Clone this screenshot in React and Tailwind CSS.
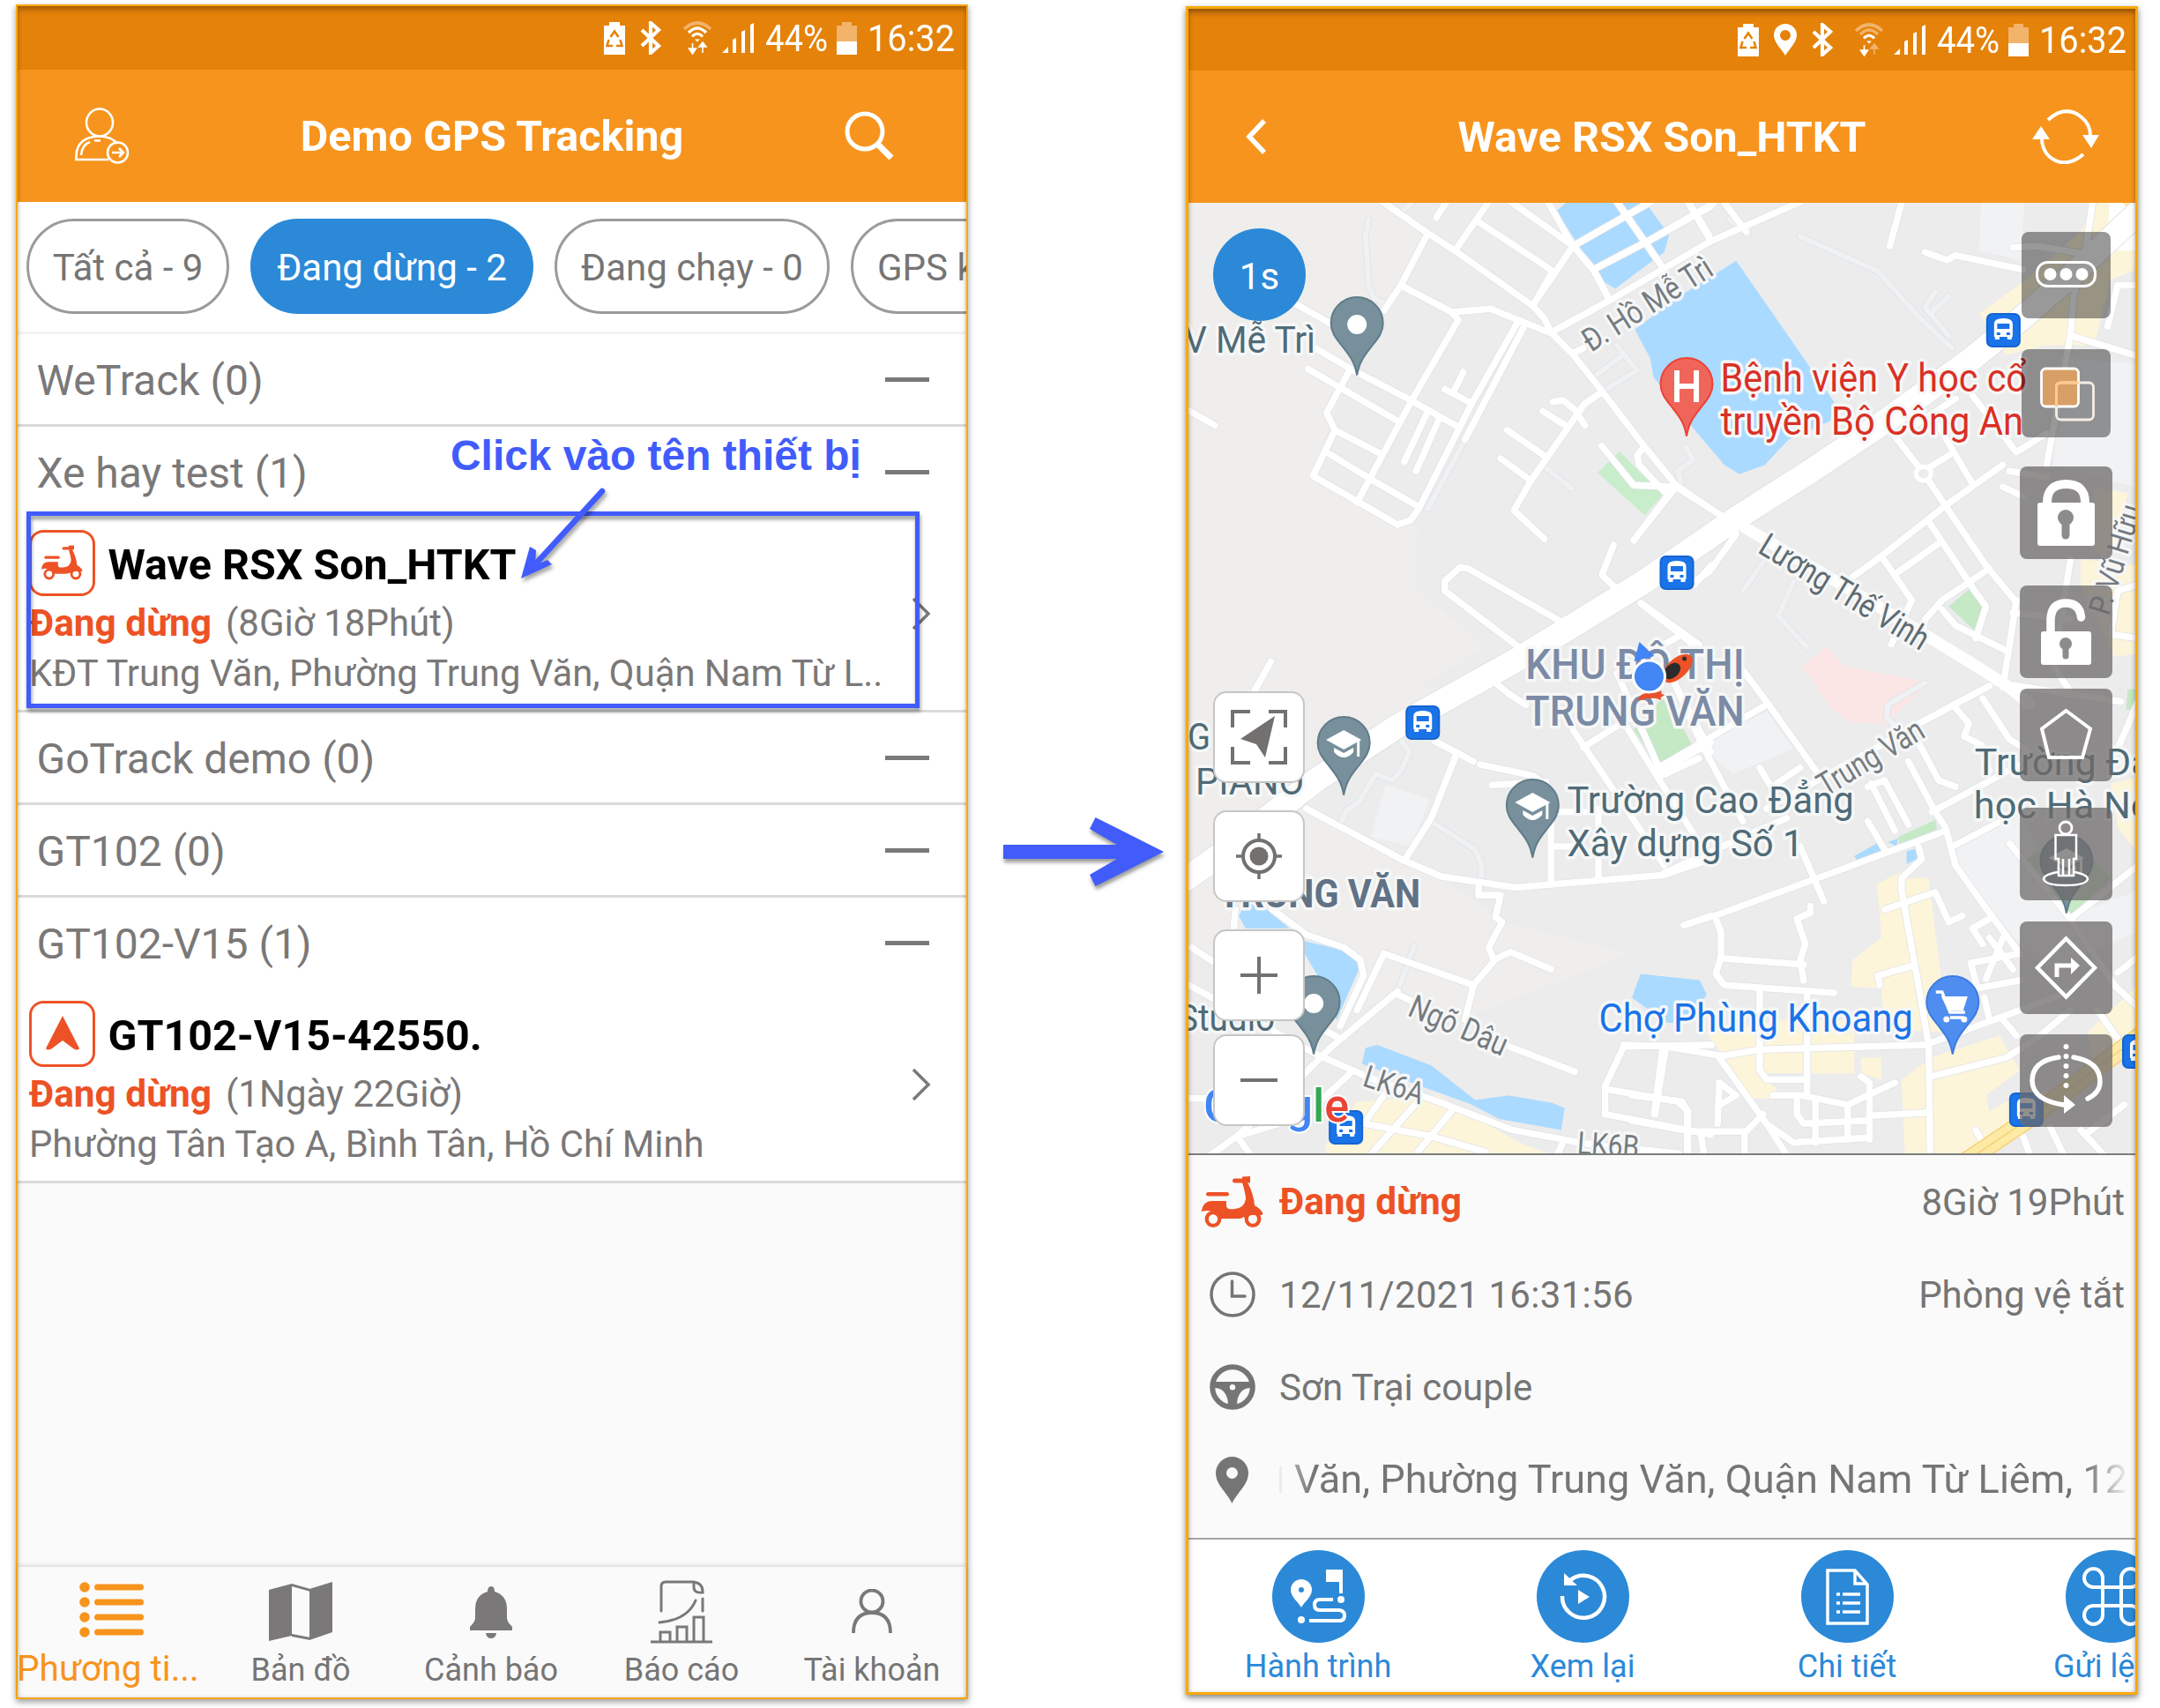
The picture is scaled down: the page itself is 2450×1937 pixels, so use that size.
import React from "react";
import { Command } from "lucide-react";

/* ---------- status bar ---------- */

function RecycleBattery() {
  return (
    <svg className="h-[37px] w-[24px]" viewBox="0 0 24 37">
      <path d="M6 0h12v4h6v33H0V4h6z" fill="#fff" />
      <g fill="none" stroke="#e58209" strokeWidth="2.600">
        <path d="M7.500 17l4.500-6.500 4.500 6.500M18.500 20l2 7H14M10 27H3.500l2-7" />
      </g>
    </svg>
  );
}

function BluetoothGlyph() {
  return (
    <svg className="h-[38px] w-[24px]" viewBox="0 0 24 38">
      <path d="M2 10l19 18-9 8V2l9 8L2 28" fill="none" stroke="#fff" strokeWidth="4.2" strokeLinejoin="miter" />
    </svg>
  );
}

function WifiGlyph({ dim }) {
  return (
    <svg className="h-[38px] w-[32px]" viewBox="0 0 32 38" fill="none" strokeWidth="3">
      <path d="M1 9Q16 -5 31 9" stroke="#f2b46b" strokeWidth="3.6" />
      <path d="M6 13Q16 3 26 13" stroke={dim ? "#f2b46b" : "#fff"} strokeWidth="3.4" />
      <path d="M10 17.500Q16 11 22 17.500" stroke="#fff" />
      <path d="M13 20.500h6l-3 3z" fill="#fff" />
      <path d="M10.500 25v8M6.500 31h8l-4 6z" stroke="#fff" fill="#fff" strokeWidth="1.600" />
      <path d="M22 36v-9M18 29h8l-4-5z" stroke={dim ? "#f2b46b" : "#fff"} fill={dim ? "#f2b46b" : "#fff"} strokeWidth="1.600" />
    </svg>
  );
}

function SignalGlyph() {
  return (
    <svg className="h-[36px] w-[36px]" viewBox="0 0 36 36" fill="#fff">
      <path d="M0 35l7-7v7zM12 20l4-2v17h-4zM22 11l4-2v26h-4zM32 3l4-2v34h-4z" />
    </svg>
  );
}

function LocationGlyph() {
  return (
    <svg className="h-[36px] w-[26px]" viewBox="0 0 26 36">
      <path fillRule="evenodd" d="M13 0a13 13 0 0 1 13 13c0 8-9 16-13 23C9 29 0 21 0 13A13 13 0 0 1 13 0zm0 7a6 6 0 1 0 0 12 6 6 0 0 0 0-12z" fill="#fff" />
    </svg>
  );
}

function StatusBar({ location, className }) {
  return (
    <div className={"flex shrink-0 items-center justify-end bg-[#e58209] text-[43px] leading-none text-white " + className}>
      <RecycleBattery />
      {location ? (
        <span className="ml-[17px] flex"><LocationGlyph /></span>
      ) : null}
      <span className="ml-[17px] flex"><BluetoothGlyph /></span>
      <span className="ml-[25px] flex"><WifiGlyph dim={location} /></span>
      <span className="ml-[12px] flex"><SignalGlyph /></span>
      <span className="ml-[13px] w-[71px]">
        <span className="inline-block origin-left scale-x-[0.89]">44%</span>
      </span>
      <svg className="ml-[10px] h-[37px] w-[23px]" viewBox="0 0 23 37">
        <path d="M6 0h11v4h6v33H0V4h6z" fill="#f2b46b" />
        <path d="M0 22h23v15H0z" fill="#fff" />
      </svg>
      <span className="ml-[12px] w-[100px]">
        <span className="inline-block origin-left scale-x-[0.925]">16:32</span>
      </span>
    </div>
  );
}

/* ---------- shared glyphs ---------- */

function Scooter({ className, hub = "#fff" }) {
  return (
    <svg className={className} viewBox="0 0 70 58" fill="#ed5226">
      <path d="M37.500 2.500H46V0.500L55 0V7.500H37.500a2.500 2.500 0 0 1 0-5z" />
      <rect x="5" y="18" width="26" height="4.600" rx="2.300" />
      <path d="M0 38.500Q2 28.500 11 28H28V33Q28 37 33 37.300H36Q48 37 50 26Q50 20 46 7H52Q59 20 60 33Q66 36 69.500 42L68 44H58Q52 44 47 46.500Q45 48 40 48H20Q20 42 10 39.500Q5 38.500 0 40z" />
      <circle cx="13" cy="48.500" r="7.300" fill={hub} stroke="#ed5226" strokeWidth="4.200" />
      <circle cx="58" cy="48.500" r="7.300" fill={hub} stroke="#ed5226" strokeWidth="4.200" />
      <path d="M46 40H66L69 44H58Q52 44 48 47z" />
    </svg>
  );
}

/* ---------- left phone ---------- */

function Chip({ active, className, children }) {
  return (
    <div
      className={
        "flex h-[108px] shrink-0 items-center justify-center rounded-full pt-[2px] text-[42px] whitespace-nowrap " +
        (active ? "bg-[#2b89d8] text-white " : "border-[3px] border-[#9b9b9b] bg-white text-[#757575] ") +
        className
      }
    >
      {children}
    </div>
  );
}

function GroupRow({ name, line = true }) {
  return (
    <div
      className={
        "flex h-[105px] items-center justify-between border-b-[3px] pt-[3px] pr-[42px] pl-[21.5px] text-[48px] text-[#7a7878] " +
        (line ? "border-[#dadada]" : "border-transparent")
      }
    >
      <span>{name}</span>
      <span className="mb-[3px] h-[5px] w-[50px] bg-[#7a7878]" />
    </div>
  );
}

function Device({ icon, name, time, address }) {
  return (
    <div className="flex h-[219px] items-center border-b-[3px] border-[#dadada] pr-[40px] pl-[13px]">
      <div className="flex h-full grow flex-col pt-[12px]">
        <div className="flex h-[78px] items-start">
          <span className="flex h-[75px] w-[75px] items-center justify-center rounded-[16px] border-[3px] border-[#ed5226]">{icon}</span>
          <span className="mt-[2px] ml-[14.5px] text-[48.4px] leading-[75px] font-bold text-black">{name}</span>
        </div>
        <div className="flex gap-[16px] text-[42px] leading-[56px] text-[#7a7878]">
          <span className="text-[42.4px] font-bold text-[#ed5226]">Đang dừng</span>
          <span>{time}</span>
        </div>
        <div className="text-[41.8px] leading-[57px] whitespace-nowrap text-[#7a7878]">{address}</div>
      </div>
      <svg className="h-[38px] w-[22px] shrink-0 -translate-y-px" viewBox="0 0 22 38">
        <path d="M2 2l17 17L2 36" fill="none" stroke="#7a7878" strokeWidth="3.500" />
      </svg>
    </div>
  );
}

function Tab({ icon, label, active }) {
  return (
    <div className={"flex shrink-0 flex-col items-center " + (active ? "w-[213px] text-[#f7941d]" : "w-[216px] text-[#757575]")}>
      <div className="flex h-[90px] items-center justify-center pt-[6px]">{icon}</div>
      <span className={"leading-[50px] whitespace-nowrap " + (active ? "-ml-px self-start text-[40.6px]" : "pt-[2px] text-[36px]")}>{label}</span>
    </div>
  );
}

function LeftPhone() {
  return (
    <div className="relative mt-[5px] ml-[18px] flex h-[1922px] w-[1080px] flex-col border-2 border-[#f8a90c] bg-white shadow-[0_3px_7px_rgba(0,0,0,0.4)]">
      <StatusBar className="h-[72px] pr-[12px]" />
      <div className="flex h-[150px] shrink-0 items-center bg-[#f7941d]">
        <div className="flex w-[160px] shrink-0 pl-[65px]">
          <svg className="h-[64px] w-[62px]" viewBox="0 0 62 64" fill="none" stroke="#fff" strokeWidth="2.600">
            <ellipse cx="28" cy="17" rx="15" ry="15.500" />
            <path d="M38 59H1.500V55Q2 33 28 32.500Q42 33 48 41M7 54Q8 42 17 39M22 37.500h7" />
            <circle cx="48.500" cy="51" r="11.500" />
            <path d="M42 51h12M50 46l5 5-5 5" />
          </svg>
        </div>
        <span className="grow pt-[3px] text-center text-[48.5px] font-bold text-white">Demo GPS Tracking</span>
        <div className="flex w-[160px] shrink-0 justify-end pr-[81px]">
          <svg className="h-[58px] w-[58px]" viewBox="0 0 58 58" fill="none" stroke="#fff">
            <circle cx="24" cy="24" r="20" strokeWidth="5" />
            <path d="M38 38l16 16" strokeWidth="7" />
          </svg>
        </div>
      </div>
      <div className="flex h-[150px] shrink-0 gap-[24px] overflow-hidden border-b-[3px] border-[#f3f3f3] pt-[19px] pl-[10px]">
        <Chip className="w-[230px]">Tất cả - 9</Chip>
        <Chip active className="w-[321px]">Đang dừng - 2</Chip>
        <Chip className="w-[312px]">Đang chạy - 0</Chip>
        <div className="flex h-[108px] w-[400px] shrink-0 items-center rounded-full border-[3px] border-[#9b9b9b] pt-[2px] pl-[27px] text-[42px] whitespace-nowrap text-[#757575]">
          GPS không
        </div>
      </div>
      <GroupRow name="WeTrack (0)" />
      <GroupRow name="Xe hay test (1)" line={false} />
      <Device
        icon={<Scooter className="mt-[-2px] h-[40px] w-[47px]" />}
        name="Wave RSX Son_HTKT"
        time="(8Giờ 18Phút)"
        address="KĐT Trung Văn, Phường Trung Văn, Quận Nam Từ L.."
      />
      <GroupRow name="GoTrack demo (0)" />
      <GroupRow name="GT102 (0)" />
      <GroupRow name="GT102-V15 (1)" line={false} />
      <Device
        icon={
          <svg className="mt-[-2px] h-[39px] w-[38px]" viewBox="0 0 38 39">
            <path d="M19 0l19 37q-2 3-7 0l-12-9-12 9q-5 3-7 0z" fill="#ed5226" />
          </svg>
        }
        name="GT102-V15-42550."
        time="(1Ngày 22Giờ)"
        address="Phường Tân Tạo A, Bình Tân, Hồ Chí Minh"
      />
      <div className="min-h-0 grow bg-[#fafafa]" />
      <div className="relative flex h-[148px] shrink-0 overflow-hidden bg-[#fafafa] shadow-[0_-2px_5px_rgba(0,0,0,0.12)]">
        <Tab
          active
          label="Phương ti..."
          icon={
            <svg className="h-[63px] w-[73px]" viewBox="0 0 73 63" fill="#f7941d">
              {[6, 23, 40, 57].map((y) => (
                <g key={y}>
                  <circle cx="6" cy={y} r="5.800" />
                  <rect x="17" y={y - 3.5} width="56" height="7" rx="3.500" />
                </g>
              ))}
            </svg>
          }
        />
        <Tab
          label="Bản đồ"
          icon={
            <svg className="mt-[4px] h-[67px] w-[72px]" viewBox="0 0 72 67" fill="#7a7878">
              <path d="M0 9L26 2V61L0 67zM46 8L72 0V57L46 66zM26 2L47 8V11L26 5zM26 59L47 63V66L26 62z" />
            </svg>
          }
        />
        <Tab
          label="Cảnh báo"
          icon={
            <svg className="mt-[7px] h-[60px] w-[48px]" viewBox="0 0 48 60" fill="#7a7878">
              <path d="M24 0q4 0 4 6 14 4 14 20v10q0 4 6 10v4H0v-4q6-6 6-10V26Q6 10 20 6q0-6 4-6zM18 53h12q-1 6-6 6t-6-6z" />
            </svg>
          }
        />
        <Tab
          label="Báo cáo"
          icon={
            <svg className="mt-[5px] h-[72px] w-[70px]" viewBox="0 0 70 72" fill="none" stroke="#7a7878" strokeWidth="3">
              <path d="M12 35V7Q12 2 17 2H48Q59 3 59 13V14Q49 15 49 8V3M59 21v14M51 23Q42 45 10 48" strokeLinecap="round" />
              <path d="M11 69V59h11v10M30 69V53h11v16M49 69V42h11v27M0 70h70" />
            </svg>
          }
        />
        <Tab
          label="Tài khoản"
          icon={
            <svg className="mt-[4px] h-[50px] w-[46px]" viewBox="0 0 46 50" fill="none" stroke="#7a7878" strokeWidth="3.800">
              <ellipse cx="23" cy="14" rx="12.500" ry="12.500" />
              <path d="M2 50Q2 27 23 27T44 50" />
            </svg>
          }
        />
      </div>
      <div className="pointer-events-none absolute inset-0 shadow-[inset_0_5px_6px_-1px_rgba(80,40,0,0.4),inset_0_0_4px_rgba(0,0,0,0.15)]" />

      {/* callout frame, caption and pointer */}
      <div className="absolute top-[573px] left-[10px] h-[223px] w-[1013px] border-[5px] border-[#415cfb] drop-shadow-[1px_4px_2px_rgba(0,0,0,0.4)]" />
      <span className="absolute top-[482px] left-[491px] font-['Liberation_Sans'] text-[47.9px] leading-[56px] font-bold whitespace-nowrap text-[#415cfb]">
        Click vào tên thiết bị
      </span>
      <svg className="absolute top-[544px] left-[560px] h-[120px] w-[120px] drop-shadow-[2px_4px_2px_rgba(0,0,0,0.35)]" viewBox="0 0 120 120">
        <path d="M103 6L28 88" stroke="#415cfb" strokeWidth="6.500" strokeLinecap="round" />
        <path d="M11 105L21 69L28 73L27 90L41 84L46 89z" fill="#415cfb" />
      </svg>
    </div>
  );
}

/* ---------- map ---------- */

// Each tile holds its roads and areas in its own drawing units.
const TILES = [
  {
    origin: [1340, 220],
    areas: [
      ["#ececed", "600,28 1568,28 1568,1568 700,1568 900,1440 690,1250 700,1060 380,900 500,560 720,130"],
      ["#aadaff", "1110,55 1140,28 1375,28 1445,130 1430,185 1285,300 1240,270 1220,230"],
      ["#c8edcb", "1298,818 1425,955 1372,1020 1233,885"],
    ],
    pale: [
      "555,80 545,130 555,290 570,330 600,345", "840,780 730,1000", "660,50 685,25", "1080,870 1155,935",
      "1210,590 1310,510 1350,560 1250,625", "1290,480 1310,510", "1495,805 1515,845 1470,880 1480,915",
    ],
    roads: [
      "590,20 730,125 810,180 1040,355 1075,395 1095,440 1160,510 1245,625 1370,800 1465,925 1568,1000",
      "730,125 650,290 600,370", "650,290 800,375 820,400 680,660 520,980", "800,375 915,365 1090,440",
      "910,25 810,180", "785,25 755,75", "875,85 1100,245 1040,355", "970,20 1160,165 1220,240 1265,330",
      "1160,165 1040,355", "1160,165 1390,25", "1220,240 1390,145 1568,40", "1290,25 1420,225", "1500,25 1568,150",
      "340,350 440,410", "390,485 500,555 680,655 820,740", "375,555 470,615 640,720",
      "500,555 430,695 455,750 390,895 640,1050 680,1035 705,995 860,665 1000,400",
      "455,750 590,825", "430,820 560,905 705,995", "835,565 810,620", "780,620 860,665", "1015,420 840,780",
      "730,690 660,850", "765,710 695,880", "1245,630 1195,665 1035,910 985,1005 1075,1095",
      "1100,660 1130,655 1165,685 1195,735", "1070,690 1145,740", "965,750 1080,835", "945,840 1035,910",
      "1365,810 1350,830 1355,860 1430,945", "1460,930 1340,1100", "1280,1115 1245,1210 1300,1265",
      "1000,1440 780,1260 780,1230 825,1185 850,1190 1120,1355", "1360,1300 1480,1400 1560,1470", "1480,1400 1430,1430",
      "1520,1240 1568,1180", "0,675 100,735", "265,1485 210,1590", "1160,505 1190,490",
    ],
  },
  {
    origin: [1850, 220],
    areas: [
      ["#ececed", "-10,28 1520,28 1520,1568 -10,1568"],
      ["#aadaff", "-223,55 -193,28 42,28 112,130 97,185 -48,300 -93,270 -113,230"],
      ["#f0f2f4", "1035,28 1165,28 1150,210 1030,180"],
      ["#f0f2f4", "1270,520 1500,540 1490,930 1250,860"],
      ["#aadaff", "310,212 600,660 590,720 465,780 395,860 320,890 275,860 180,740 65,580 55,520 10,430 150,320"],
      ["#fdf5da", "1030,380 1160,280 1330,120 1380,28 1415,28 1410,180 1500,180 1500,240 1420,270 1370,480 1230,480 1110,510"],
      ["#ffffff", "1415,28 1510,28 1510,180 1410,180"],
      ["#fde9a0", "1455,28 1510,28 1510,90"],
      ["#fdf5da", "1370,930 1470,950 1440,1100 1400,1150 1360,1120"],
      ["#fdf5da", "1330,1160 1500,1180 1500,1460 1430,1470 1330,1240"],
      ["#fbe5e5", "505,1500 580,1438 640,1510 830,1540 880,1555 750,1680 650,1678 590,1632"],
      ["#c5e8c5", "1000,1255 1040,1310 1020,1390 940,1310"],
      ["#c8edcb", "-35,818 92,955 40,1020 -100,885"],
    ],
    pale: [
      "500,135 730,245 850,390 950,490", "900,310 870,360 940,450", "940,325 885,380", "390,1170 330,1260",
      "480,1230 435,1340 520,1440", "290,80 345,130",
    ],
    roads: [
      "-238,440 -60,335 235,150 500,25", "170,28 230,130", "275,28 340,120", "-113,240 57,145 245,28", "-43,25 87,225", "-173,165 57,25",
      "-250,20 -173,165 -113,240 -68,330",
      "800,28 765,165", "870,185 935,210 960,195 1160,240", "1130,170 1200,165 1340,190",
      "1365,28 1345,180 1310,320 1300,450 1230,860", "1300,450 1500,515", "1500,290 1440,290 1410,420",
      "-88,800 7,925 132,930 300,1045", "132,930 7,1100", "760,740 860,880", "880,910 930,990 1050,1180 1135,1290",
      "880,870 940,830", "900,720 1010,920", "1010,640 1140,820 1230,760", "1100,860 930,990 740,1150 650,1220",
      "960,650 830,740", "880,1040 1010,1250 1050,1310 1020,1410", "740,1150 830,1290 770,1430", "910,1110 790,1200",
      "1060,1190 920,1290 870,1350 860,1400", "920,1320 960,1370 1110,1450", "1140,1290 1100,1568",
      "1130,1330 1300,1350", "1120,880 1230,900", "1100,930 1160,960", "310,1080 230,1200 170,1240",
      "30,1300 200,1430", "1300,1160 1250,1500 1300,1580", "1430,1400 1500,1410", "1500,1240 1440,1260 1420,1400",
    ],
  },
  {
    origin: [1340, 760],
    areas: [
      ["#ececed", "370,440 640,180 930,0 1568,0 1568,1540 0,1540 0,900 300,900 420,1150 640,1010 850,1100 1330,900 950,800 770,655"],
      ["#aadaff", "170,780 190,740 240,750 320,820 190,820"],
      ["#aadaff", "365,860 500,895 530,940 460,1110 420,1000 365,900"],
      ["#aadaff", "545,1200 580,1190 740,1255 870,1365 970,1350 1100,1375 1135,1390 1125,1460 940,1425 860,1380 720,1325 535,1250"],
      ["#aadaff", "1360,965 1535,985 1555,1030 1500,1120 1440,1120 1335,1040"],
      ["#c5e8c5", "1415,100 1440,90 1515,245 1415,305 1340,190"],
      ["#fdf5da", "425,1515 520,1370 760,1350 1000,1500 1100,1540 430,1540"],
      ["#f0f2f4", "605,365 735,410 680,560 560,530"],
    ],
    pale: [
      "650,220 675,260 650,320 625,350 575,330 525,420 490,445 470,490", "740,480 870,570 890,620 885,690", "690,875 640,1020",
    ],
    roads: [
      "370,440 660,605 770,655 990,690 1430,650 1568,600", "815,265 740,470 660,605", "750,225 865,290",
      "885,300 1040,335 1060,350", "920,365 1080,355", "930,40 970,75 1020,110", "1160,190 1430,620", "1190,245 1330,150",
      "1095,400 1095,680", "1235,440 1235,660", "1110,450 1240,450", "1110,560 1180,560", "1420,320 1568,230",
      "1290,10 1410,300", "1440,0 1568,260",
      "880,690 880,715 945,715 930,785 950,800 910,880 925,920 975,895 1095,950", "925,925 865,1000 840,1110",
      "865,1000 600,900 520,1080", "640,1020 440,1200 330,1320 165,1480 60,1560", "640,1030 700,1060",
      "970,1195 1165,1275", "270,760 370,840 480,880 530,920 540,970 470,1130", "160,760 155,820", "30,880 100,930",
      "22,1000 400,1220 570,1300 760,1370 980,1460 1180,1500 1568,1560", "400,1130 470,1170", "22,1360 90,1360",
      "165,1480 205,1540", "165,1480 350,1420", "500,1280 400,1380", "620,1320 540,1440", "700,1370 600,1490 560,1540",
      "800,1400 700,1530", "540,1440 740,1480 900,1530", "1490,810 1568,780", "1100,1568 1130,1500",
      "1255,1410 1255,1320 1310,1195 1570,1190", "1425,1200 1400,1410", "1255,1330 1470,1370 1500,1400 1500,1568",
      "1255,1410 1568,1475",
    ],
  },
  {
    origin: [1850, 760],
    areas: [
      ["#ececed", "230,0 1520,0 1520,1540 230,1540"],
      ["#fbe5e5", "515,0 640,-10 830,28 880,45 750,170 650,165 590,120"],
      ["#f0f2f4", "205,240 400,130 480,250 300,330"],
      ["#f0f2f4", "960,570 1150,450 1300,780 1500,700 1500,830 1240,950 1150,870 970,630"],
      ["#aadaff", "660,590 735,545 745,580 670,608"],
      ["#aadaff", "760,545 790,535 785,560"],
      ["#aadaff", "815,575 850,565 845,600 815,615"],
      ["#aadaff", "875,1060 920,1115 875,1120"],
      ["#c5e8c5", "790,530 900,475 905,505 795,560"],
      ["#c5e8c5", "1170,600 1290,520 1420,660 1290,790"],
      ["#c5e8c5", "1470,60 1510,60 1510,130 1465,125"],
      ["#c5e8c5", "82,100 107,90 182,245 82,305 7,190"],
      ["#fdf5da", "725,680 800,640 800,660 880,660 915,960 935,1150 770,1140 745,1090 740,1010 650,1005 655,920 740,850 735,760"],
      ["#fdf5da", "220,1150 460,1110 660,1110 660,1280 380,1280 430,1330 430,1360 360,1360 270,1220"],
      ["#fdf5da", "680,1230 740,1230 740,1300 680,1280"],
      ["#fdf5da", "890,1230 1090,1160 1150,1270 1050,1350 1060,1400 1130,1360 1250,1330 1170,1430 990,1540 810,1540 800,1300"],
      ["#fdf5da", "1350,1150 1500,1000 1500,1140 1370,1260"],
      ["#fdf5da", "1420,360 1500,340 1500,580 1440,500"],
      ["#aadaff", "27,965 202,985 222,1030 170,1120 107,1120 2,1040"],
    ],
    pale: ["870,40 760,110 755,150 780,175"],
    roads: [
      "95,645 330,530 460,470", "155,810 260,775 540,665 930,510", "500,560 570,735",
      "250,790 265,830 265,910 250,965 275,1000 600,1025", "265,915 510,935", "530,750 530,770 490,790 515,870 500,920 510,985",
      "1060,50 860,165 400,440", "960,120 1000,170 985,210 1040,240 1060,320", "1040,90 1120,220 1180,260",
      "1150,300 890,450", "820,290 900,450 930,500 960,620 1060,770 1150,900", "850,230 910,350 960,370",
      "710,360 780,510", "750,350 820,490", "700,480 750,570", "700,370 750,350", "-60,100 60,310 190,530",
      "330,0 400,100 560,340", "400,110 80,310", "110,0 210,240 330,480", "80,340 200,280", "380,310 430,400", "430,360 500,310",
      "850,560 860,600 800,660 800,700 850,1000 880,1190 885,1560", "750,760 900,705 940,800 980,780", "830,940 730,970 735,1000",
      "-23,1190 100,1195 270,1225 380,1205 870,1190 1100,1100 1300,1020", "260,1230 400,1440 480,1500 700,1485",
      "380,1020 380,1270 400,1300 520,1300", "520,1020 520,1350", "100,1210 70,1410", "0,1350 150,1370 165,1400 165,1540",
      "0,1430 180,1465 340,1465 390,1410", "260,1310 255,1440", "260,1310 310,1350 255,1385",
      "420,1350 500,1350 640,1380 780,1310", "490,1360 490,1410 510,1440 700,1430", "640,1380 640,1490", "545,1360 545,1500",
      "680,1290 705,1310 705,1490", "710,1415 880,1405", "205,1470 215,1540", "335,1470 335,1540", "0,1520 140,1535",
      "400,1440 460,1540", "890,1290 1110,1230 1200,1170 1300,1080", "1060,790 1010,820 1040,870", "1005,930 1150,900",
      "1005,930 1025,1010 1150,985", "1060,850 1130,950", "1100,850 1050,980", "950,560 1130,460", "1045,1040 1060,1110",
      "1100,1110 1140,1160", "1120,550 1300,790 1500,620", "1300,790 1430,1000 1500,1070", "1440,960 1500,910", "1500,100 1440,250",
      "1350,1470 1460,1380", "1240,1450 1280,1540", "1330,1460 1400,1540", "1160,1480 1180,1540", "1020,1460 1040,1500",
      "1080,40 1450,100", "1380,1080 1440,1170",
    ],
  },
];

const HIGHWAY = "-20,2200 100,2110 400,1860 640,1690 1000,1475 1358,1240 1643,1030 1863,880 2073,730 2333,530 2483,400 2633,260 2833,60";

const tileTransform = ([x, y]) => `translate(${x} ${y}) scale(0.38265 0.35714)`;

function Lines({ list, color, width }) {
  return list.map((points, i) => (
    <polyline
      key={i}
      points={points}
      fill="none"
      stroke={color}
      strokeWidth={width}
      strokeLinecap="round"
      strokeLinejoin="round"
      vectorEffect="non-scaling-stroke"
    />
  ));
}

function Pin({ x, y, fill = "#78909c", edge = "#5f7c88", children }) {
  return (
    <g transform={`translate(${x} ${y})`}>
      <path
        d="M0 1.500C-3 -15 -8 -20 -18 -33C-25 -42 -29.500 -48 -29.500 -57.500A29.500 29.500 0 0 1 29.500 -57.500C29.500 -48 25 -42 18 -33C8 -20 3 -15 0 1.500Z"
        fill={fill}
        stroke={edge}
        strokeWidth="2"
      />
      {children}
    </g>
  );
}

function Cap() {
  return (
    <g fill="#fff">
      <path d="M0 -72L20 -61L0 -50L-20 -61z" />
      <path d="M-11 -52v5q11 12 22 0v-5L0 -46z" />
      <path d="M15 -60h3v18h-3z" />
    </g>
  );
}

function Bus({ x, y }) {
  return (
    <g transform={`translate(${x} ${y})`}>
      <rect x="1" y="1" width="37" height="37" rx="6" fill="#1a73e8" stroke="#1665cf" strokeWidth="2" />
      <path
        fillRule="evenodd"
        fill="#fff"
        d="M9 12q0-6 10.500-6T30 12v15h-1v3h-5v-3h-9v3h-5v-3H9zM12.500 12v6h14v-6zM12 22h4v3h-4zM23 22h4v3h-4z"
      />
    </g>
  );
}

function Label({ x, y, w, size = 42, color = "#4f6b77", angle = 0, weight = 400, children }) {
  return (
    <text
      transform={`translate(${x} ${y}) rotate(${angle})`}
      textLength={w}
      lengthAdjust="spacingAndGlyphs"
      fontSize={size}
      fontWeight={weight}
      fill={color}
      stroke="#f6f7f7"
      strokeWidth="7"
      strokeLinejoin="round"
      paintOrder="stroke"
    >
      {children}
    </text>
  );
}

function MapCanvas() {
  return (
    <svg className="absolute inset-0 h-full w-full" viewBox="1348 230 1073 1078" preserveAspectRatio="none" fontFamily="Roboto, sans-serif">
      <rect x="1340" y="220" width="1100" height="1100" fill="#efeeec" />
      {TILES.map((t, i) => (
        <g key={i} transform={tileTransform(t.origin)}>
          {t.areas.map(([fill, points], j) => (
            <polygon key={j} points={points} fill={fill} />
          ))}
        </g>
      ))}
      {TILES.map((t, i) => (
        <g key={i} transform={tileTransform(t.origin)}>
          <Lines list={t.pale} color="#e2e5e8" width="8" />
          <Lines list={t.pale} color="#eff1f3" width="6" />
        </g>
      ))}
      {TILES.map((t, i) => (
        <g key={i} transform={tileTransform(t.origin)}>
          <Lines list={t.roads} color="#e0e2e6" width="9" />
        </g>
      ))}
      <g transform={tileTransform([1340, 220])}>
        <Lines list={[HIGHWAY]} color="#e0e2e6" width="29" />
      </g>
      {TILES.map((t, i) => (
        <g key={i} transform={tileTransform(t.origin)}>
          <Lines list={t.roads} color="#ffffff" width="7.5" />
        </g>
      ))}
      <g transform={tileTransform([1340, 220])}>
        <Lines list={[HIGHWAY]} color="#ffffff" width="27" />
      </g>
      <g transform={tileTransform([1850, 220])}>
        <Lines list={["330,1055 700,1290 1000,1485 1110,1560 1180,1620"]} color="#ffffff" width="13" />
        <circle cx="865" cy="888" r="22" fill="#ececed" stroke="#fff" strokeWidth="5" vectorEffect="non-scaling-stroke" />
      </g>
      <g transform={tileTransform([1850, 760])}>
        <Lines list={["990,1560 1170,1430 1520,1150"]} color="#f3d27a" width="21" />
        <Lines list={["990,1560 1170,1430 1520,1150"]} color="#fdeaa4" width="18" />
        <Lines list={["990,1560 1170,1430 1520,1150"]} color="#f3d27a" width="1.5" />
      </g>

      <Bus x={1882} y={630} />
      <Bus x={2252} y={355} />
      <Bus x={1594} y={800} />
      <Bus x={1507} y={1259} />
      <Bus x={2278} y={1239} />
      <Bus x={2406} y={1173} />

      <Label x={1804} y={400} w={167} size={37} angle={-32.3} color="#757b80">Đ. Hồ Mễ Trì</Label>
      <Label x={1992} y={626} w={217} size={38} angle={31.2} color="#5f6b73">Lương Thế Vinh</Label>
      <Label x={2070} y={904} w={134} size={37} angle={-31} color="#757b80">Trung Văn</Label>
      <Label x={2391} y={699} w={128} size={35} angle={-73} color="#757b80">P. Vũ Hữu</Label>
      <Label x={1595} y={1151} w={118} size={37} angle={23.5} color="#757b80">Ngõ Dâu</Label>
      <Label x={1544} y={1231} w={70} size={35} angle={18} color="#757b80">LK6A</Label>
      <Label x={1788} y={1308} w={70} size={35} angle={4} color="#757b80">LK6B</Label>

      <Label x={1343} y={399.500} w={149}>V Mễ Trì</Label>
      <Label x={1347} y={850} size={42} w={26}>G</Label>
      <Label x={1356} y={901} w={123}>PIANO</Label>
      <Label x={1336} y={1169} w={110}>Studio</Label>
      <Label x={1777} y={922} w={325}>Trường Cao Đẳng</Label>
      <Label x={1777} y={971} w={268}>Xây dựng Số 1</Label>
      <Label x={2239} y={879} w={211}>Trường Đại</Label>
      <Label x={2238} y={928} w={213}>học Hà Nội</Label>
      <Label x={1730} y={770} w={248} size={48} weight={500} color="#7b8ba6">KHU ĐÔ THỊ</Label>
      <Label x={1730} y={822.500} w={248} size={48} weight={500} color="#7b8ba6">TRUNG VĂN</Label>
      <Label x={1382} y={1029} w={229} size={44} weight={700} color="#607286">TRUNG VĂN</Label>
      <Label x={1951} y={444} w={347} size={43.5} color="#d93025">Bệnh viện Y học cổ</Label>
      <Label x={1951} y={493} w={343} size={43.5} color="#d93025">truyền Bộ Công An</Label>
      <Label x={1813} y={1170} w={356} size={43.5} color="#1a73e8">Chợ Phùng Khoang</Label>

      <Pin x={1539} y={424}>
        <circle cy="-56" r="11" fill="#fff" />
      </Pin>
      <Pin x={1912.500} y={493} fill="#f0655a" edge="#ea4335">
        <path d="M-11 -73v36M11 -73v36M-11 -55h22" stroke="#fff" strokeWidth="6" />
      </Pin>
      <Pin x={1524} y={900}><Cap /></Pin>
      <Pin x={1738} y={971}><Cap /></Pin>
      <Pin x={2343} y={1034}><Cap /></Pin>
      <Pin x={1490} y={1194}>
        <circle cy="-56" r="11" fill="#fff" />
      </Pin>
      <Pin x={2214} y={1194} fill="#4f8df0" edge="#3b7be0">
        <path d="M-19 -69h7l9 23h17M-3 -40h15" fill="none" stroke="#fff" strokeWidth="3.500" />
        <path d="M-13 -64H17L12 -48H-5z" fill="#fff" />
        <circle cx="-7" cy="-38" r="3.500" fill="#fff" />
        <circle cx="13" cy="-38" r="3.500" fill="#fff" />
      </Pin>

      <text x="1365" y="1272" fontSize="52" fontWeight="500" textLength="165" lengthAdjust="spacingAndGlyphs" stroke="#fff" strokeWidth="4" paintOrder="stroke">
        <tspan fill="#4285f4">G</tspan><tspan fill="#ea4335">o</tspan><tspan fill="#fbbc05">o</tspan><tspan fill="#4285f4">g</tspan><tspan fill="#34a853">l</tspan><tspan fill="#ea4335">e</tspan>
      </text>

      {/* tracked motorbike and own position */}
      <g>
        <path d="M1857 795q2-10 14-9 8 0 13-3v4l4 1-5 3 1 3-6-2q-10-1-21 3z" fill="#e8512a" />
        <ellipse cx="1902" cy="758" rx="21" ry="11" transform="rotate(-42 1902 758)" fill="#ee5126" />
        <ellipse cx="1896" cy="761" rx="11" ry="7.500" transform="rotate(-42 1896 761)" fill="#2b2b2b" />
        <circle cx="1910" cy="747" r="2.500" fill="#2b2b2b" />
        <path d="M1859 728L1876 744L1853 750z" fill="#4285f4" />
        <circle cx="1870" cy="767" r="18" fill="#4285f4" stroke="#fff" strokeWidth="3" />
      </g>
    </svg>
  );
}

function WhiteButton({ className = "", children }) {
  return (
    <div className={"h-[104px] w-[104px] rounded-[15px] border-2 border-[#c6c6c6] bg-white " + className}>
      <svg className="-m-0.5 h-[104px] w-[104px]" viewBox="0 0 104 104" fill="none" stroke="#737070" strokeWidth="4">
        {children}
      </svg>
    </div>
  );
}

function DarkButton({ className, children }) {
  return (
    <svg className={"h-[105px] w-[105px] rounded-[8px] bg-[#6e6a6a]/75 " + className} viewBox="0 0 105 105" fill="none" stroke="#fff">
      {children}
    </svg>
  );
}

function MapPanel() {
  return (
    <div className="relative h-[1078px] shrink-0 overflow-hidden">
      <MapCanvas />
      <div className="absolute top-[29px] left-[28px] flex h-[105px] w-[105px] items-center justify-center rounded-full bg-[#2b89d8] pt-[4px] text-[42px] text-white">
        <span>1s</span>
      </div>
      <div className="absolute top-[554px] left-[28px] flex flex-col">
        <WhiteButton>
          <path d="M22 41V23H42M63 23H82V41M82 63V81H63M42 81H22V63" />
          <path d="M70 28L31 54L49 60L59 75z" fill="#737070" stroke="none" />
        </WhiteButton>
        <WhiteButton className="mt-[31px]">
          <circle cx="52" cy="52" r="18" />
          <circle cx="52" cy="52" r="10.500" fill="#737070" stroke="none" />
          <path d="M52 26v8M52 70v8M26 52h8M70 52h8" strokeWidth="3.500" />
        </WhiteButton>
        <WhiteButton className="mt-[31px]">
          <path d="M31 52h42M52 31v42" />
        </WhiteButton>
        <WhiteButton className="mt-[15px]">
          <path d="M31 52h42" />
        </WhiteButton>
      </div>
      <div className="absolute top-[33px] left-[943px] flex w-[105px] flex-col items-center">
        <svg className="h-[98px] w-[101px] rounded-[8px] bg-black/40" viewBox="0 0 100 98" fill="none" stroke="#fff">
          <rect x="17" y="34.500" width="66" height="27" rx="12" strokeWidth="3" />
          <g fill="#fff" stroke="none">
            <circle cx="32" cy="48" r="7" />
            <circle cx="50" cy="48" r="7" />
            <circle cx="68" cy="48" r="7" />
          </g>
        </svg>
        <svg className="mt-[35px] h-[100px] w-[101px] rounded-[8px] bg-black/40" viewBox="0 0 100 100" fill="none">
          <rect x="22" y="22" width="42" height="43" rx="5" fill="#d8a066" stroke="#fff" strokeWidth="2.800" />
          <rect x="39" y="38" width="42" height="42" rx="5" stroke="#f5ede4" strokeWidth="2.800" />
          <path d="M39 65V43q0-5 5-5h20" stroke="#ffc98a" strokeWidth="2.800" />
        </svg>
        <DarkButton className="mt-[33px]">
          <rect x="20" y="41" width="65" height="49" rx="3" fill="#fff" stroke="none" />
          <path d="M31 44V41Q31 20 52.500 20T74 41V44" strokeWidth="10" />
          <circle cx="52" cy="58" r="9" fill="#8d8b8b" stroke="none" />
          <path d="M52 60v18" stroke="#8d8b8b" strokeWidth="9" strokeLinecap="round" />
        </DarkButton>
        <DarkButton className="mt-[30px]">
          <rect x="24" y="52" width="57" height="38" rx="3" fill="#fff" stroke="none" />
          <path d="M35 54V38Q36 20 52 20T69.500 36" strokeWidth="9.500" strokeLinecap="round" />
          <circle cx="52" cy="66" r="7" fill="#8d8b8b" stroke="none" />
          <path d="M52 68v12" stroke="#8d8b8b" strokeWidth="7" strokeLinecap="round" />
        </DarkButton>
        <DarkButton className="mt-[12px]">
          <path d="M52.500 25L80 45.500L71 78H33L25 45.500z" strokeWidth="4" />
        </DarkButton>
        <DarkButton className="mt-[30px]">
          <circle cx="52" cy="23" r="7" strokeWidth="2.800" />
          <path d="M40.500 31H64V58H61V77H44V58H40.500zM49 58v18M56 58v18" strokeWidth="2.500" />
          <path d="M43 73Q27 76 27 81Q29 88 52 88T77 81Q77 76 62 73" strokeWidth="2.500" />
        </DarkButton>
        <DarkButton className="mt-[24px]">
          <path d="M52.500 19.500L85 52.500L52.500 85.500L20 52.500z" strokeWidth="4.500" />
          <path d="M42 63V50H60" strokeWidth="5" />
          <path d="M58 41L68 50L58 60z" fill="#fff" stroke="none" />
        </DarkButton>
        <DarkButton className="mt-[23px]">
          <path d="M44 26Q14 30 14 53Q15 75 50 80M61 26Q91 31 91 54Q91 66 77 73" strokeWidth="5.500" strokeLinecap="round" />
          <path d="M50 69L63 80L50 90z" fill="#fff" stroke="none" />
          <g fill="#fff" stroke="none">
            {[14, 25, 36, 47, 58].map((y) => (
              <circle key={y} cx="52.500" cy={y} r="3" />
            ))}
          </g>
        </DarkButton>
      </div>
    </div>
  );
}

/* ---------- right phone ---------- */

function InfoRow({ icon, children, right }) {
  return (
    <div className="flex h-[105px] shrink-0 items-center pt-px pr-[12px] text-[42px] text-[#757575]">
      <span className="flex w-[103px] shrink-0 items-center justify-center pr-[4px]">{icon}</span>
      {children}
      {right ? <span className="ml-auto">{right}</span> : null}
    </div>
  );
}

function Action({ label, children }) {
  return (
    <div className="flex w-[300px] shrink-0 flex-col items-center pt-[12px] text-[36px] text-[#2b89d8]">
      <svg className="h-[105px] w-[105px] rounded-full bg-[#2b89d8]" viewBox="0 0 105 105" fill="none" stroke="#fff" strokeWidth="4">
        {children}
      </svg>
      <span className="pt-[1px] leading-[52px] whitespace-nowrap">{label}</span>
    </div>
  );
}

function RightPhone() {
  return (
    <div className="relative mt-[7px] mr-[25px] ml-auto flex h-[1915px] w-[1080px] flex-col border-[3px] border-[#f8a90c] bg-white shadow-[0_3px_7px_rgba(0,0,0,0.5)]">
      <StatusBar location className="h-[70px] pr-[9px]" />
      <div className="flex h-[150px] shrink-0 items-center bg-[#f7941d]">
        <div className="flex w-[160px] shrink-0 pl-[65px]">
          <svg className="h-[40px] w-[24px]" viewBox="0 0 24 40">
            <path d="M21 2L4 20L21 38" fill="none" stroke="#fff" strokeWidth="5.500" />
          </svg>
        </div>
        <span className="grow pt-[3px] text-center text-[48.4px] font-bold text-white">Wave RSX Son_HTKT</span>
        <div className="flex w-[160px] shrink-0 justify-end pr-[41px]">
          <svg className="h-[62px] w-[76px]" viewBox="0 0 76 62" fill="none" stroke="#fff" strokeWidth="4">
            <path d="M18 12Q38 -6 56 9Q67 18 66 32" />
            <path d="M58 51Q38 68 20 54Q10 45 11 30" />
            <path d="M57 29H76L67 44zM0 34H20L10 19z" fill="#fff" stroke="none" />
          </svg>
        </div>
      </div>
      <MapPanel />
      <div className="flex h-[438px] shrink-0 flex-col border-t-2 border-b-2 border-t-[#7d7d7d] border-b-[#a5a5a5] bg-[#fafafa]">
        <InfoRow icon={<Scooter hub="#fafafa" className="h-[58px] w-[70px]" />} right="8Giờ 19Phút">
          <span className="text-[42.4px] font-bold text-[#ed5226]">Đang dừng</span>
        </InfoRow>
        <InfoRow
          right="Phòng vệ tắt"
          icon={
            <svg className="h-[52px] w-[52px]" viewBox="0 0 52 52" fill="none" stroke="#757575" strokeWidth="3.500">
              <circle cx="26" cy="26" r="24" />
              <path d="M25.500 11V28H40" strokeLinecap="round" />
            </svg>
          }
        >
          <span className="tracking-[0.32px]">12/11/2021 16:31:56</span>
        </InfoRow>
        <InfoRow
          icon={
            <svg className="h-[52px] w-[52px]" viewBox="0 0 52 52" fill="none" stroke="#757575">
              <circle cx="26" cy="26" r="22.800" strokeWidth="6" />
              <path
                fillRule="evenodd"
                d="M5 20H47L46 27Q38 27 34 34Q31 39 31 47H21Q21 39 18 34Q14 27 6 27zM26 23a3.200 3.200 0 1 0 0 6.400 3.200 3.200 0 0 0 0-6.400z"
                fill="#757575"
                stroke="none"
              />
            </svg>
          }
        >
          <span>Sơn Trại couple</span>
        </InfoRow>
        <InfoRow
          icon={
            <svg className="h-[53px] w-[37px]" viewBox="0 0 37 53">
              <path fillRule="evenodd" d="M18.500 0A18.500 18.500 0 0 1 37 18.500C37 32 24 41 18.500 53C13 41 0 32 0 18.500A18.500 18.500 0 0 1 18.500 0zm0 12a6.500 6.500 0 1 0 0 13 6.500 6.500 0 0 0 0-13z" fill="#757575" />
            </svg>
          }
        >
          <span className="flex grow items-center overflow-hidden [mask-image:linear-gradient(to_right,rgba(0,0,0,0.2)_0,rgba(0,0,0,0.2)_8px,rgba(0,0,0,0.6)_15px,#000_38px,#000_915px,rgba(0,0,0,0.15)_958px)]">
            <span className="h-[30px] w-[3px] shrink-0 bg-[#b5b5b5]" />
            <span className="ml-[14px] text-[45.1px] whitespace-nowrap">Văn, Phường Trung Văn, Quận Nam Từ Liêm, 12</span>
          </span>
        </InfoRow>
      </div>
      <div className="flex min-h-0 grow overflow-hidden bg-white">
        <div className="-ml-[3px] flex">
          <Action label="Hành trình">
            <path fillRule="evenodd" d="M33 33a12 12 0 0 1 12 12c0 8-8 13-12 20c-4-7-12-12-12-20a12 12 0 0 1 12-12zm0 9a3 3 0 1 0 0 6 3 3 0 0 0 0-6z" fill="#fff" stroke="none" />
            <path d="M61 22H80V49H76V36H61z" fill="#fff" stroke="none" />
            <path d="M69 56H54Q48 56 48 62Q48 68 54 68H76Q82 69 82 74Q82 80 76 80H42" />
            <circle cx="78" cy="56" r="4" fill="#fff" stroke="none" />
            <circle cx="33" cy="79" r="4" fill="#fff" stroke="none" />
          </Action>
          <Action label="Xem lại">
            <path d="M29 52A24 24 0 1 0 38 34" strokeWidth="4.500" />
            <path d="M31 26V40H46z" fill="#fff" stroke="none" />
            <path d="M47 45L60 53L47 61z" fill="#fff" stroke="none" />
          </Action>
          <Action label="Chi tiết">
            <path d="M30 23H61L75 39V83H30zM61 23V38H75" strokeWidth="3.500" />
            <path d="M47 50H67M47 60H67M47 70H67M40 50h4M40 60h4M40 70h4" strokeWidth="3.500" />
          </Action>
          <Action label="Gửi lệnh">
            <Command x="10.500" y="10.500" size={84} strokeWidth={1.15} color="#fff" />
          </Action>
        </div>
      </div>
      <div className="pointer-events-none absolute inset-0 shadow-[inset_0_5px_6px_-1px_rgba(60,30,0,0.45),inset_0_0_4px_rgba(0,0,0,0.15)]" />
    </div>
  );
}

export default function App() {
  return (
    <div className="relative flex h-[1937px] w-[2450px] items-start overflow-hidden bg-white font-['Roboto',sans-serif]">
      <LeftPhone />
      <svg className="mt-[920px] ml-[38px] h-[96px] w-[190px] shrink-0 drop-shadow-[1px_4px_2px_rgba(0,0,0,0.4)]" viewBox="0 0 190 96">
        <path d="M2 38H131L100 20L106.500 7L184 46L106.500 85L100 72L131 54H2z" fill="#415cfb" />
      </svg>
      <RightPhone />
    </div>
  );
}
